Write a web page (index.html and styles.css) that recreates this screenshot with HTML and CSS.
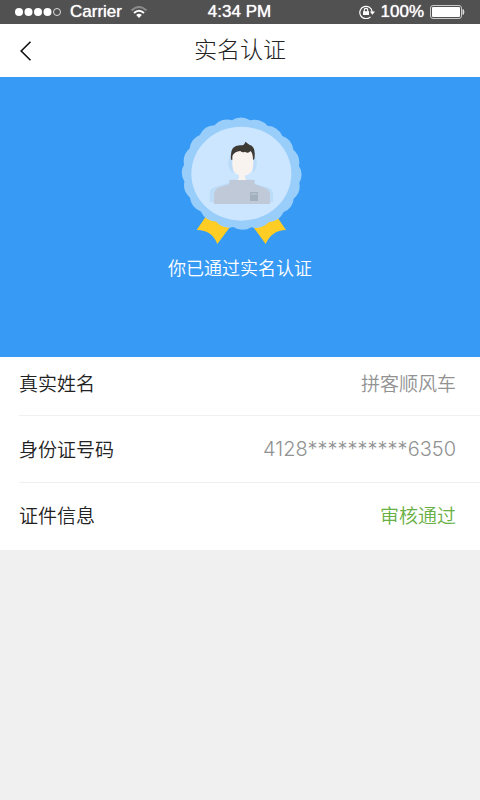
FILE: index.html
```html
<!DOCTYPE html>
<html lang="zh-CN">
<head>
<meta charset="utf-8">
<meta name="viewport" content="width=device-width, initial-scale=1">
<title>实名认证</title>
<link rel="stylesheet" href="styles.css">
</head>
<body>
<div class="status">
  <div class="status-side">
    <svg class="signal" width="48" height="10" viewBox="0 0 48 10" aria-hidden="true">
      <g fill="#fff"><circle cx="5" cy="5" r="4"/><circle cx="14.500" cy="5" r="4"/><circle cx="24" cy="5" r="4"/><circle cx="33.500" cy="5" r="4"/></g>
      <circle cx="43" cy="5" r="3.500" fill="none" stroke="#ddd"/>
    </svg>
    <span class="carrier">Carrier</span>
    <svg width="18" height="14" viewBox="0 0 18 14" fill="none" stroke-width="2" aria-hidden="true">
      <path d="M1.500 5.500Q9 -1.500 16.500 5.500" stroke="#8b8b8b"/>
      <path d="M4 8Q9 3.500 14 8" stroke="#fff"/>
      <path d="M6.200 10Q9 7.500 11.800 10L9 13Z" fill="#fff"/>
    </svg>
  </div>
  <span class="time">4:34 PM</span>
  <div class="status-side status-right">
    <svg width="16" height="14" viewBox="0 0 16 14" fill="none" stroke="#fff" aria-hidden="true">
      <path d="M11.500 11.800A6.200 6.200 0 1 1 13.200 7" stroke-width="1.200"/>
      <path d="M10.800 6.500H16L13.400 9.800Z" fill="#fff" stroke="none"/>
      <path d="M4 6.200H10V10H4Z" fill="#fff" stroke="none"/>
      <path d="M5.300 6.500V5A1.700 1.700 0 0 1 8.700 5V6.500" stroke-width="1.200"/>
    </svg>
    <span class="percent">100%</span>
    <svg width="35" height="14" viewBox="0 0 35 14" aria-hidden="true">
      <rect x="0.500" y="0.500" width="31" height="13" rx="2.500" fill="none" stroke="#ccc"/>
      <rect x="2" y="2" width="28" height="10" rx="1" fill="#fff"/>
      <path d="M33 4.500Q35 7 33 9.500Z" fill="#ddd" stroke="#ddd"/>
    </svg>
  </div>
</div>
<header class="nav">
  <button class="back" type="button" aria-label="返回">
    <svg width="12" height="20" viewBox="0 0 12 20" fill="none" stroke="#111" stroke-width="1.600"><path d="M10.500 0.800L1.200 10L10.500 19.200"/></svg>
  </button>
  <h1 class="title">实名认证</h1>
</header>
<main>
  <section class="hero">
    <svg class="medal" width="145" height="145" viewBox="-6 0 435 435" aria-hidden="true">
      <path fill="#ffcd24" d="M112 328L80 375Q125 374 142 417L180 366Z"/>
      <path fill="#ffcd24" d="M320 334L348 375Q305 376 287 417L250 366Z"/>
      <path fill="#99cdfa" d="M390 206A50 50 0 0 1 381 256A50 50 0 0 1 357 301A50 50 0 0 1 318 337A50 50 0 0 1 269 360A50 50 0 0 1 215 368A50 50 0 0 1 161 360A50 50 0 0 1 112 337A50 50 0 0 1 73 301A50 50 0 0 1 49 256A50 50 0 0 1 40 206A50 50 0 0 1 49 156A50 50 0 0 1 73 111A50 50 0 0 1 112 75A50 50 0 0 1 161 52A50 50 0 0 1 215 44A50 50 0 0 1 269 52A50 50 0 0 1 318 75A50 50 0 0 1 357 111A50 50 0 0 1 381 156A50 50 0 0 1 390 206Z" transform="rotate(9 215 206)"/>
      <ellipse cx="214" cy="206" rx="150" ry="141" fill="#cce6ff"/>
      <path fill="#bcdcf8" d="M119 292V262Q121 250 136 246L177 233V225H254V236L294 248Q308 252 309 264V292Z"/>
      <path fill="#bcdcf8" d="M180 155Q168 177 182 198L190 203V150ZM249 150V203Q266 188 258 158Z"/>
      <path fill="#c0c9d7" d="M132 297V269Q134 252 148 247L178 238V229Q178 224 184 224H248Q254 224 254 229V238L286 249Q299 254 300 269V297Z"/>
      <path fill="#f9f3ef" d="M207 205H225V221Q235 225 225 225H207Q197 225 207 221Z"/>
      <path fill="#f9f3ef" d="M187 147Q187 135 216 135Q250 135 250 151V180Q248 212 217 213Q188 210 187 181Z"/>
      <path fill="#3d3935" d="M183 164Q178 120 211 121Q224 122 226 110L238 119Q259 124 253 162L249 165Q249 145 242 138Q234 147 225 140Q218 145 211 138Q193 139 187 153V164Z"/>
      <path fill="#a3b0be" d="M240 261H264V288H240Z"/>
      <path d="M243 267H261" stroke="#c0c9d7" stroke-width="3"/>
    </svg>
    <p class="hero-text">你已通过实名认证</p>
  </section>
  <dl class="list">
    <div class="row"><dt>真实姓名</dt><dd>拼客顺风车</dd></div>
    <div class="row"><dt>身份证号码</dt><dd class="number">4128**********6350</dd></div>
    <div class="row"><dt>证件信息</dt><dd class="passed">审核通过</dd></div>
  </dl>
</main>
</body>
</html>
```

FILE: styles.css
```css
* { box-sizing: border-box; }
body {
  margin: 0;
  background: #f0f0f0;
  color: #222;
  font-family: "Noto Sans CJK SC", sans-serif;
  font-weight: 350;
}
.status {
  display: grid;
  grid-template-columns: 1fr auto 1fr;
  align-items: center;
  height: 24px;
  padding: 0 15px 0 14px;
  background: #515151;
  color: #fff;
  font-family: "Liberation Sans", Arial, sans-serif;
  font-size: 17px;
  font-weight: 400;
  line-height: 24px;
  text-shadow: 0 0 1px #fff;
}
.status-side { display: flex; align-items: center; gap: 8px; }
.status-right { justify-content: flex-end; gap: 6px; }
.nav {
  display: grid;
  grid-template-columns: 48px 1fr 48px;
  align-items: center;
  height: 53px;
  background: #fff;
}
.back {
  display: flex;
  align-items: center;
  height: 48px;
  padding: 0 0 0 20px;
  border: 0;
  background: none;
}
.title {
  margin: 0;
  padding-bottom: 6px;
  font-size: 23px;
  font-weight: 300;
  line-height: 32px;
  text-align: center;
}
.hero {
  display: flex;
  flex-direction: column;
  align-items: center;
  height: 280px;
  padding-top: 28px;
  background: #379bf5;
  color: #fff;
}
.hero-text { margin: 5px 0 0; font-size: 18px; line-height: 24px; }
.list { margin: 0; padding-left: 19px; background: #fff; }
.row {
  display: flex;
  align-items: center;
  justify-content: space-between;
  height: 67px;
  padding-right: 24px;
  border-bottom: 1px solid #f0f0f0;
  font-size: 19px;
  line-height: 28px;
}
.row:first-child { height: 59px; padding-bottom: 6px; }
.row:last-child { padding-bottom: 4px; border-bottom: 0; }
.row dd { margin: 0; color: #929292; }
.row .number {
  font-family: Inter, "Liberation Sans", sans-serif;
  font-size: 20px;
  font-weight: 300;
}
.row .passed { color: #68b044; }
```
